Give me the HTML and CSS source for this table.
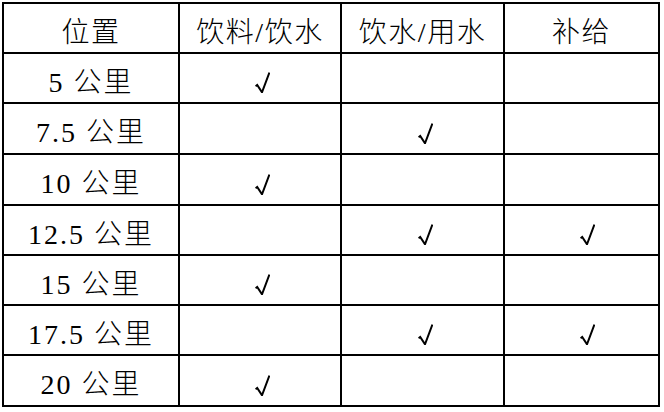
FILE: index.html
```html
<!DOCTYPE html>
<html lang="zh">
<head>
<meta charset="utf-8">
<title>补给站</title>
<link rel="stylesheet" href="styles.css">
</head>
<body>
<div class="table">
  <div class="cell head">位置</div>
  <div class="cell head">饮料/饮水</div>
  <div class="cell head">饮水/用水</div>
  <div class="cell head">补给</div>

  <div class="cell km">5 公里</div>
  <div class="cell"><svg class="check" viewBox="0 0 15 21"><path d="M0.6 14.2 L2.2 13 L7 20.3 L14.4 0.6"/></svg></div>
  <div class="cell"></div>
  <div class="cell"></div>

  <div class="cell km">7.5 公里</div>
  <div class="cell"></div>
  <div class="cell"><svg class="check" viewBox="0 0 15 21"><path d="M0.6 14.2 L2.2 13 L7 20.3 L14.4 0.6"/></svg></div>
  <div class="cell"></div>

  <div class="cell km">10 公里</div>
  <div class="cell"><svg class="check" viewBox="0 0 15 21"><path d="M0.6 14.2 L2.2 13 L7 20.3 L14.4 0.6"/></svg></div>
  <div class="cell"></div>
  <div class="cell"></div>

  <div class="cell km">12.5 公里</div>
  <div class="cell"></div>
  <div class="cell"><svg class="check" viewBox="0 0 15 21"><path d="M0.6 14.2 L2.2 13 L7 20.3 L14.4 0.6"/></svg></div>
  <div class="cell last"><svg class="check" viewBox="0 0 15 21"><path d="M0.6 14.2 L2.2 13 L7 20.3 L14.4 0.6"/></svg></div>

  <div class="cell km">15 公里</div>
  <div class="cell"><svg class="check" viewBox="0 0 15 21"><path d="M0.6 14.2 L2.2 13 L7 20.3 L14.4 0.6"/></svg></div>
  <div class="cell"></div>
  <div class="cell"></div>

  <div class="cell km">17.5 公里</div>
  <div class="cell"></div>
  <div class="cell"><svg class="check" viewBox="0 0 15 21"><path d="M0.6 14.2 L2.2 13 L7 20.3 L14.4 0.6"/></svg></div>
  <div class="cell last"><svg class="check" viewBox="0 0 15 21"><path d="M0.6 14.2 L2.2 13 L7 20.3 L14.4 0.6"/></svg></div>

  <div class="cell km">20 公里</div>
  <div class="cell"><svg class="check" viewBox="0 0 15 21"><path d="M0.6 14.2 L2.2 13 L7 20.3 L14.4 0.6"/></svg></div>
  <div class="cell"></div>
  <div class="cell"></div>
</div>
</body>
</html>
```
FILE: styles.css
```css
html, body {
  margin: 0;
  padding: 0;
  background: #ffffff;
}

.table {
  margin: 2px 0 0 2px;
  width: 654px;
  display: grid;
  grid-template-columns: 174px 160px 161px 153px;
  grid-template-rows: 48px 48px 49px 49px 48px 48px 48px 49px;
  gap: 2px;
  padding: 2px;
  background: #000000;
  font-family: "Liberation Serif", "Noto Sans CJK SC", serif;
  color: #000000;
}

.cell {
  background: #ffffff;
  display: flex;
  align-items: center;
  justify-content: center;
  padding: 9px 0 0 5px;
  box-sizing: border-box;
  font-size: 28px;
  line-height: 1;
  font-weight: 300;
}

.cell.head {
  padding: 9px 0 0 0;
  letter-spacing: 1.5px;
}

.cell.km {
  padding: 9px 0 0 0;
  letter-spacing: 2px;
}

.cell.last {
  padding-left: 12px;
}

.check {
  width: 15px;
  height: 21px;
  fill: none;
  stroke: #000000;
  stroke-width: 2;
  stroke-linejoin: miter;
}
```
